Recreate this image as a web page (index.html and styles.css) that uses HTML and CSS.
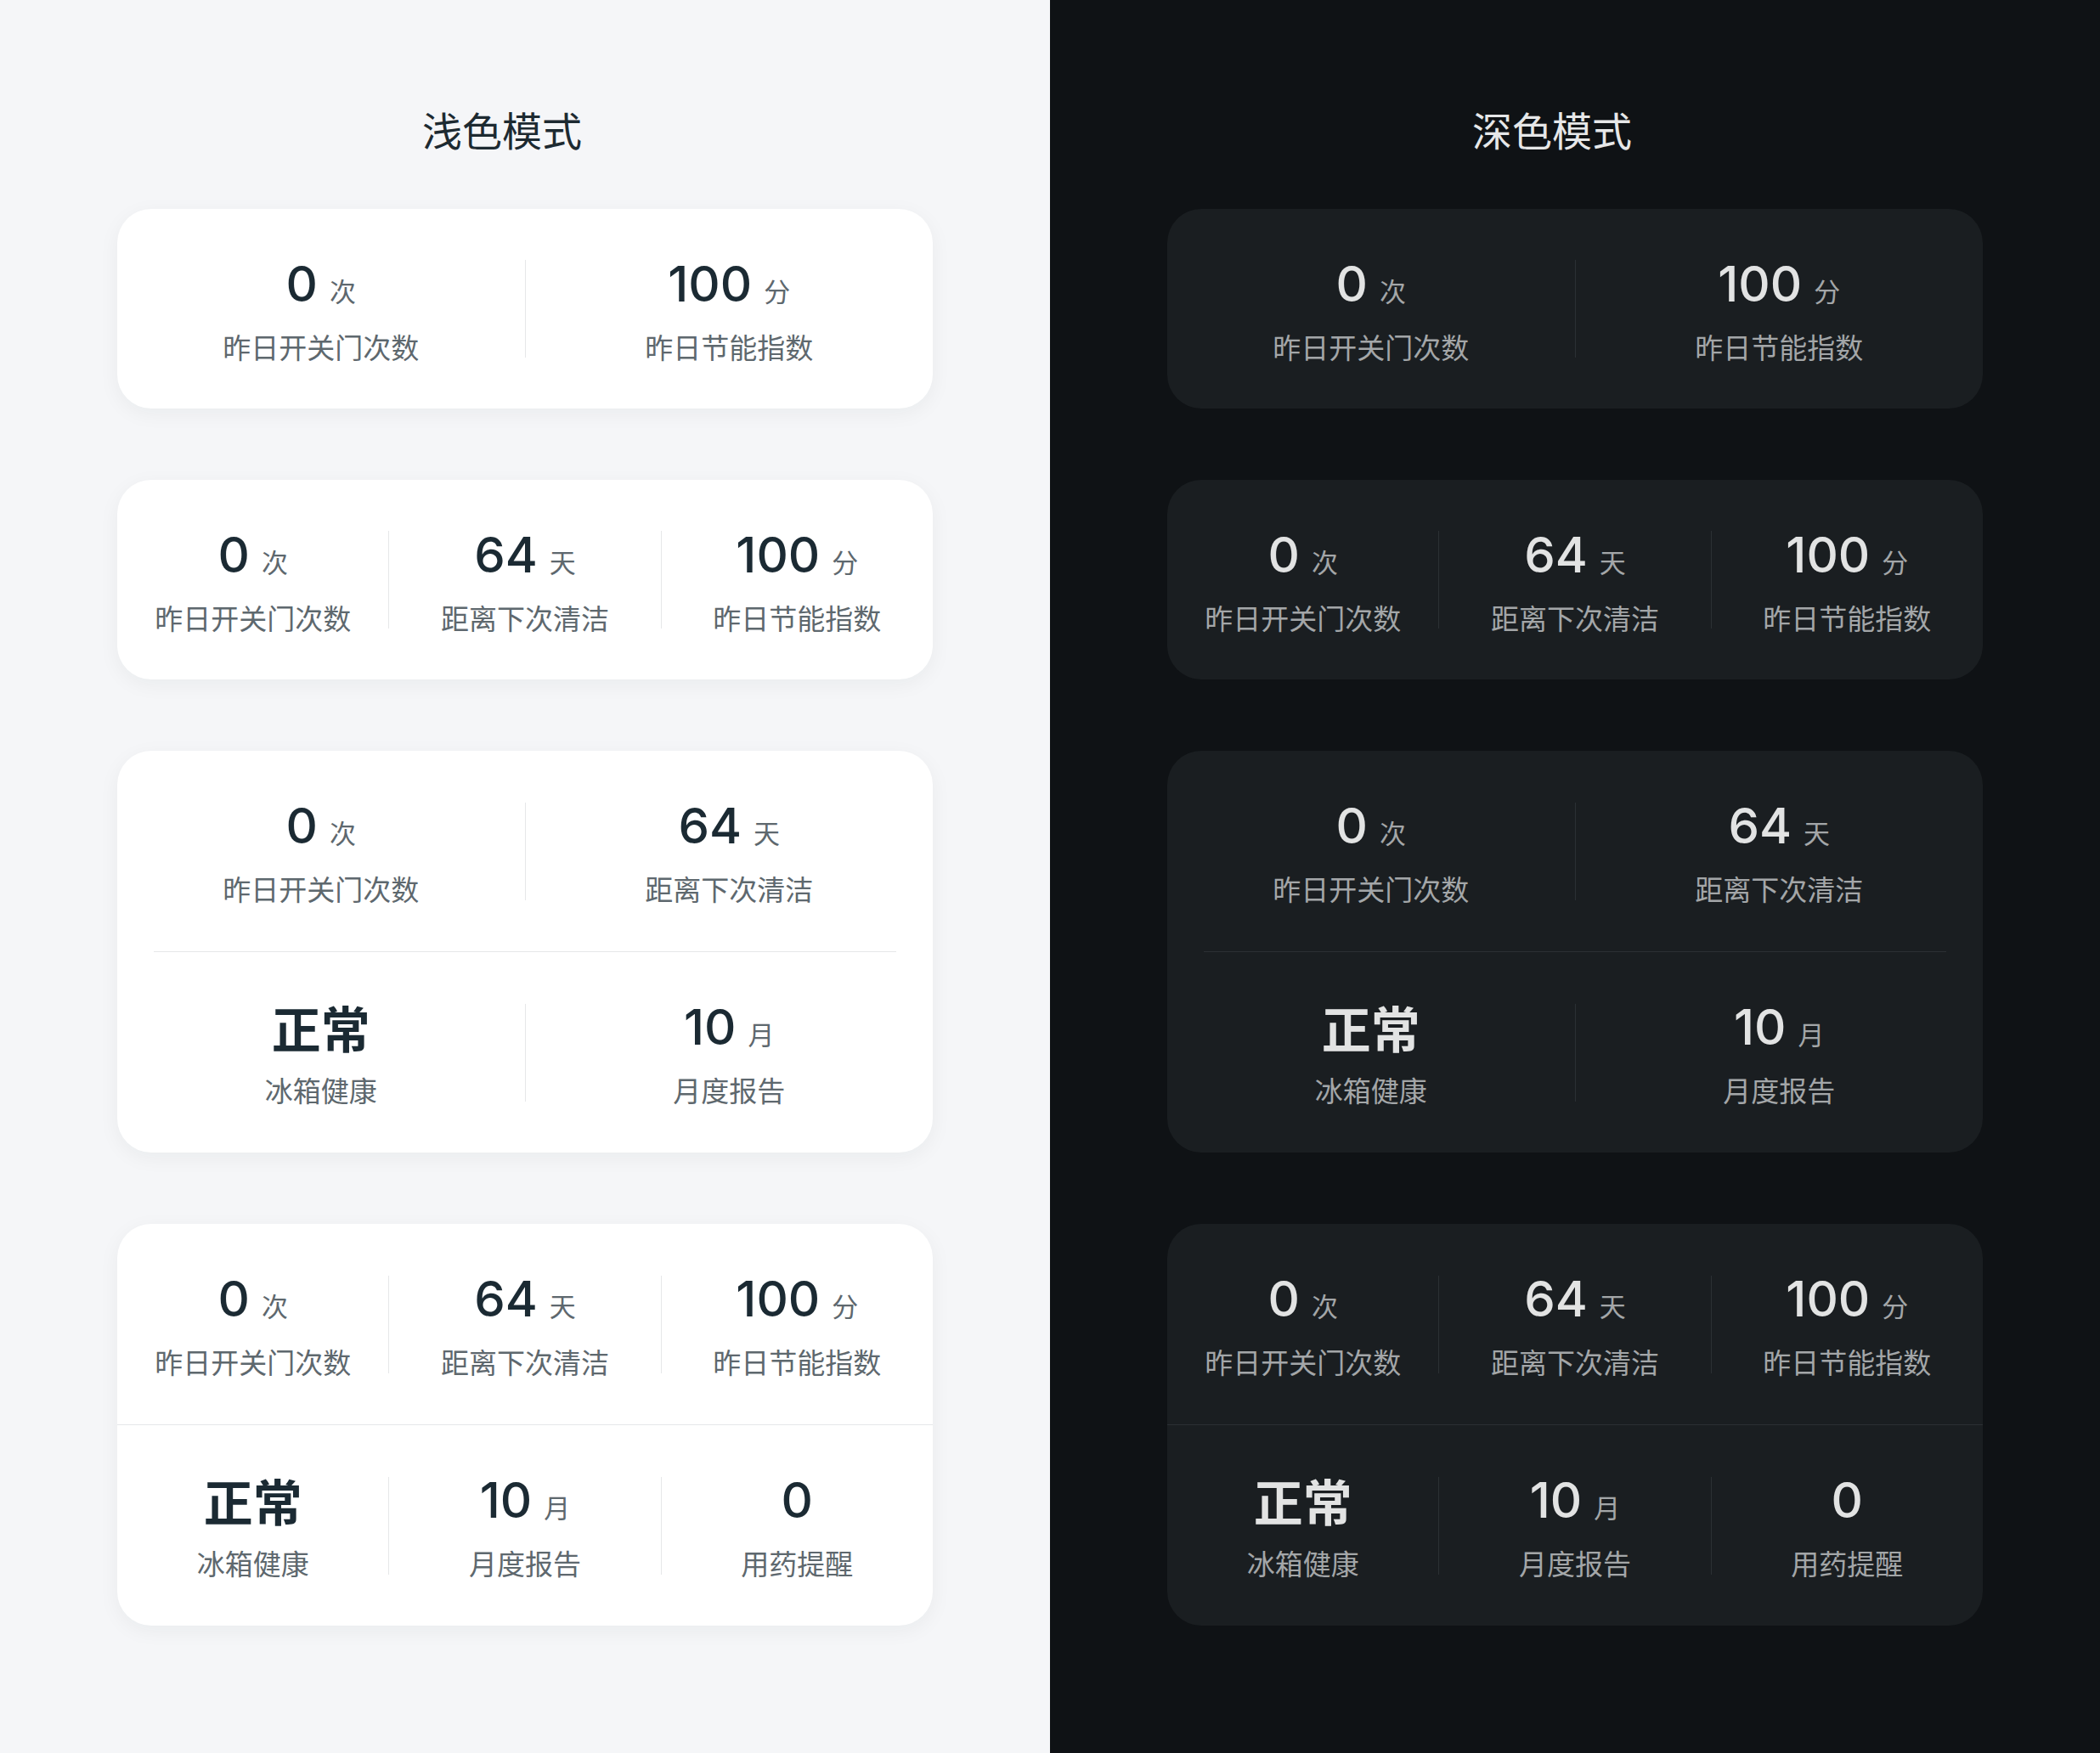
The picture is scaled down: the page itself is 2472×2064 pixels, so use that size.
FILE: index.html
```html
<!DOCTYPE html>
<html lang="zh-CN">
<head>
<meta charset="utf-8">
<title>数据卡片</title>
<link rel="stylesheet" href="styles.css">
</head>
<body>
<div class="page">
    <section class="half light">
        <h2 class="mode_title">浅色模式</h2>

        <div class="card">
            <div class="row">
                <div class="cell"><div class="val">0<span class="unit">次</span></div><div class="lbl">昨日开关门次数</div></div>
                <div class="sep"></div>
                <div class="cell"><div class="val">100<span class="unit">分</span></div><div class="lbl">昨日节能指数</div></div>
            </div>
        </div>

        <div class="card">
            <div class="row">
                <div class="cell"><div class="val">0<span class="unit">次</span></div><div class="lbl">昨日开关门次数</div></div>
                <div class="sep"></div>
                <div class="cell"><div class="val">64<span class="unit">天</span></div><div class="lbl">距离下次清洁</div></div>
                <div class="sep"></div>
                <div class="cell"><div class="val">100<span class="unit">分</span></div><div class="lbl">昨日节能指数</div></div>
            </div>
        </div>

        <div class="card tall">
            <div class="row">
                <div class="cell"><div class="val">0<span class="unit">次</span></div><div class="lbl">昨日开关门次数</div></div>
                <div class="sep"></div>
                <div class="cell"><div class="val">64<span class="unit">天</span></div><div class="lbl">距离下次清洁</div></div>
            </div>
            <div class="hline inset"></div>
            <div class="row">
                <div class="cell"><div class="val cn">正常</div><div class="lbl">冰箱健康</div></div>
                <div class="sep"></div>
                <div class="cell"><div class="val">10<span class="unit">月</span></div><div class="lbl">月度报告</div></div>
            </div>
        </div>

        <div class="card tall">
            <div class="row">
                <div class="cell"><div class="val">0<span class="unit">次</span></div><div class="lbl">昨日开关门次数</div></div>
                <div class="sep"></div>
                <div class="cell"><div class="val">64<span class="unit">天</span></div><div class="lbl">距离下次清洁</div></div>
                <div class="sep"></div>
                <div class="cell"><div class="val">100<span class="unit">分</span></div><div class="lbl">昨日节能指数</div></div>
            </div>
            <div class="hline"></div>
            <div class="row">
                <div class="cell"><div class="val cn">正常</div><div class="lbl">冰箱健康</div></div>
                <div class="sep"></div>
                <div class="cell"><div class="val">10<span class="unit">月</span></div><div class="lbl">月度报告</div></div>
                <div class="sep"></div>
                <div class="cell"><div class="val">0</div><div class="lbl">用药提醒</div></div>
            </div>
        </div>
    </section>

    <section class="half dark">
        <h2 class="mode_title">深色模式</h2>

        <div class="card">
            <div class="row">
                <div class="cell"><div class="val">0<span class="unit">次</span></div><div class="lbl">昨日开关门次数</div></div>
                <div class="sep"></div>
                <div class="cell"><div class="val">100<span class="unit">分</span></div><div class="lbl">昨日节能指数</div></div>
            </div>
        </div>

        <div class="card">
            <div class="row">
                <div class="cell"><div class="val">0<span class="unit">次</span></div><div class="lbl">昨日开关门次数</div></div>
                <div class="sep"></div>
                <div class="cell"><div class="val">64<span class="unit">天</span></div><div class="lbl">距离下次清洁</div></div>
                <div class="sep"></div>
                <div class="cell"><div class="val">100<span class="unit">分</span></div><div class="lbl">昨日节能指数</div></div>
            </div>
        </div>

        <div class="card tall">
            <div class="row">
                <div class="cell"><div class="val">0<span class="unit">次</span></div><div class="lbl">昨日开关门次数</div></div>
                <div class="sep"></div>
                <div class="cell"><div class="val">64<span class="unit">天</span></div><div class="lbl">距离下次清洁</div></div>
            </div>
            <div class="hline inset"></div>
            <div class="row">
                <div class="cell"><div class="val cn">正常</div><div class="lbl">冰箱健康</div></div>
                <div class="sep"></div>
                <div class="cell"><div class="val">10<span class="unit">月</span></div><div class="lbl">月度报告</div></div>
            </div>
        </div>

        <div class="card tall">
            <div class="row">
                <div class="cell"><div class="val">0<span class="unit">次</span></div><div class="lbl">昨日开关门次数</div></div>
                <div class="sep"></div>
                <div class="cell"><div class="val">64<span class="unit">天</span></div><div class="lbl">距离下次清洁</div></div>
                <div class="sep"></div>
                <div class="cell"><div class="val">100<span class="unit">分</span></div><div class="lbl">昨日节能指数</div></div>
            </div>
            <div class="hline"></div>
            <div class="row">
                <div class="cell"><div class="val cn">正常</div><div class="lbl">冰箱健康</div></div>
                <div class="sep"></div>
                <div class="cell"><div class="val">10<span class="unit">月</span></div><div class="lbl">月度报告</div></div>
                <div class="sep"></div>
                <div class="cell"><div class="val">0</div><div class="lbl">用药提醒</div></div>
            </div>
        </div>
    </section>
</div>
</body>
</html>
```

FILE: styles.css
```css
*{margin:0;padding:0;box-sizing:border-box;}
body{font-family:"Noto Sans CJK SC","Noto Sans",sans-serif;}

.page{display:grid;grid-template-columns:1236px 1236px;min-height:2064px;}

/* two themes share the same markup, only the colours change */
.light{--bg:#f5f6f8;--card:#fff;--title:#1d2a31;--num:#1b2a33;--sub:#5e686e;--sep:#e6e7e9;--shadow:0 6px 24px rgba(20,30,40,.05);}
.dark{--bg:#0f1215;--card:#1a1e21;--title:#e6e7e8;--num:#e2e3e3;--sub:#a3a6a8;--sep:#2b3034;--shadow:none;}

.half{background:var(--bg);padding:122px 138px 0;display:flex;flex-direction:column;gap:84px;}
.mode_title{font-size:47px;line-height:60px;font-weight:400;padding-left:359px;color:var(--title);margin-bottom:-20px;}

.card{background:var(--card);border-radius:40px;box-shadow:var(--shadow);overflow:hidden;}
.row{display:flex;height:235px;}
.card.tall .row{height:236px;}
.cell{flex:1;display:flex;flex-direction:column;align-items:center;padding-top:59px;}
.sep{width:1px;height:115px;align-self:center;background:var(--sep);}
.hline{height:1px;background:var(--sep);}
.hline.inset{margin:0 43px;}

.val{font-family:Inter,"Noto Sans CJK SC",sans-serif;font-size:58px;line-height:58px;height:58px;font-weight:500;color:var(--num);white-space:nowrap;}
.val.cn{font-family:"Noto Sans CJK SC",sans-serif;font-weight:700;}
.unit{font-family:"Noto Sans CJK SC",sans-serif;font-size:31px;line-height:1;font-weight:400;color:var(--sub);margin-left:14px;}
.lbl{font-size:33px;line-height:40px;margin-top:25px;color:var(--sub);white-space:nowrap;}
```
